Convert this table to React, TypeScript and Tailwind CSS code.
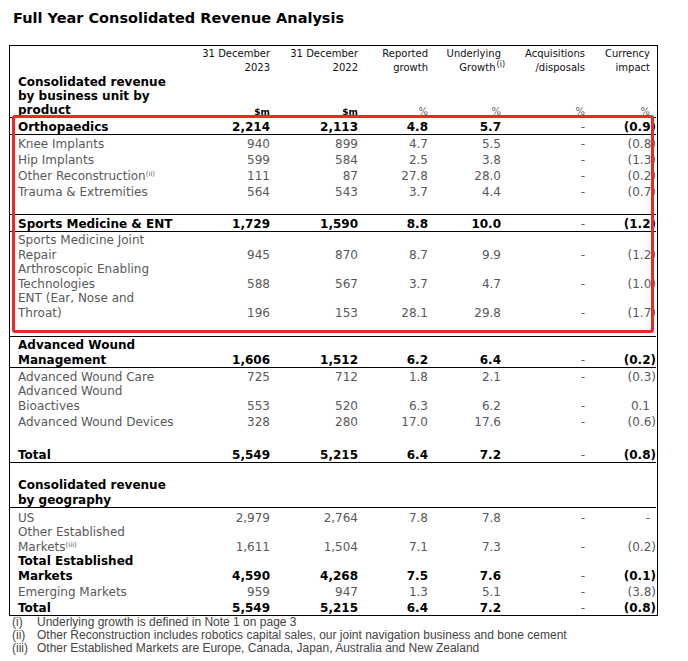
import type { ReactNode } from 'react';

const COLS = 'grid grid-cols-[186px_74px_88px_70px_73px_84px_71px]';

type Row = {
  label?: ReactNode;
  vals?: string[];
  bold?: boolean;
  h: string;
  line?: boolean;
};

const rows: Row[] = [
  { label: 'Orthopaedics', vals: ['2,214', '2,113', '4.8', '5.7', '-', '(0.9)'], bold: true, h: 'h-[17px]', line: true },
  { label: 'Knee Implants', vals: ['940', '899', '4.7', '5.5', '-', '(0.8)'], h: 'h-[16px]' },
  { label: 'Hip Implants', vals: ['599', '584', '2.5', '3.8', '-', '(1.3)'], h: 'h-[16px]' },
  {
    label: (
      <>
        Other Reconstruction<sup className="text-[7px]">(ii)</sup>
      </>
    ),
    vals: ['111', '87', '27.8', '28.0', '-', '(0.2)'],
    h: 'h-[16px]',
  },
  { label: 'Trauma & Extremities', vals: ['564', '543', '3.7', '4.4', '-', '(0.7)'], h: 'h-[16px]' },
  { h: 'h-[16px]', line: true },
  { label: 'Sports Medicine & ENT', vals: ['1,729', '1,590', '8.8', '10.0', '-', '(1.2)'], bold: true, h: 'h-[17px]', line: true },
  { label: <>Sports Medicine Joint<br />Repair</>, vals: ['945', '870', '8.7', '9.9', '-', '(1.2)'], h: 'h-[30px]' },
  { label: <>Arthroscopic Enabling<br />Technologies</>, vals: ['588', '567', '3.7', '4.7', '-', '(1.0)'], h: 'h-[29px]' },
  { label: <>ENT (Ear, Nose and<br />Throat)</>, vals: ['196', '153', '28.1', '29.8', '-', '(1.7)'], h: 'h-[29px]' },
  { h: 'h-[17px]', line: true },
  { label: <>Advanced Wound<br />Management</>, vals: ['1,606', '1,512', '6.2', '6.4', '-', '(0.2)'], bold: true, h: 'h-[31px]', line: true },
  { label: 'Advanced Wound Care', vals: ['725', '712', '1.8', '2.1', '-', '(0.3)'], h: 'h-[16px]' },
  { label: <>Advanced Wound<br />Bioactives</>, vals: ['553', '520', '6.3', '6.2', '-', '0.1'], h: 'h-[29px]' },
  { label: 'Advanced Wound Devices', vals: ['328', '280', '17.0', '17.6', '-', '(0.6)'], h: 'h-[16px]' },
  { h: 'h-[17px]' },
  { label: 'Total', vals: ['5,549', '5,215', '6.4', '7.2', '-', '(0.8)'], bold: true, h: 'h-[17px]', line: true },
  { h: 'h-[15px]' },
  { label: <>Consolidated revenue<br />by geography</>, bold: true, h: 'h-[30px]', line: true },
  { label: 'US', vals: ['2,979', '2,764', '7.8', '7.8', '-', '-'], h: 'h-[17px]' },
  {
    label: (
      <>
        Other Established
        <br />
        Markets<sup className="text-[7px]">(iii)</sup>
      </>
    ),
    vals: ['1,611', '1,504', '7.1', '7.3', '-', '(0.2)'],
    h: 'h-[29px]',
  },
  { label: <>Total Established<br />Markets</>, vals: ['4,590', '4,268', '7.5', '7.6', '-', '(0.1)'], bold: true, h: 'h-[29px]' },
  { label: 'Emerging Markets', vals: ['959', '947', '1.3', '5.1', '-', '(3.8)'], h: 'h-[16px]' },
  { label: 'Total', vals: ['5,549', '5,215', '6.4', '7.2', '-', '(0.8)'], bold: true, h: 'h-[16px]' },
];

const notes = [
  ['(i)', 'Underlying growth is defined in Note 1 on page 3'],
  ['(ii)', 'Other Reconstruction includes robotics capital sales, our joint navigation business and bone cement'],
  ['(iii)', 'Other Established Markets are Europe, Canada, Japan, Australia and New Zealand'],
];

function HeadCell({ top, unit, unitBold, pad }: { top: ReactNode; unit: string; unitBold?: boolean; pad?: boolean }) {
  return (
    <div className={`flex flex-col justify-between items-end text-right pt-px ${pad ? 'pr-[6px]' : ''}`}>
      <div className="text-[10px] leading-[14px] text-[#111]">{top}</div>
      <div className={unitBold ? 'text-[9px] leading-[10px] font-bold text-black' : 'text-[10px] leading-[10px] text-[#666]'}>
        {unit}
      </div>
    </div>
  );
}

function TableRow({ row }: { row: Row }) {
  const tone = row.bold ? 'font-bold text-black' : 'text-[#595959]';
  return (
    <div className={`${COLS} ${row.h} ${row.line ? 'border-b border-black' : ''} text-[12px] leading-[14.5px]`}>
      <div className={`pl-2 flex items-end ${tone}`}>
        <div>{row.label}</div>
      </div>
      {row.vals?.map((v, i) => {
        const isDash = i === 4 || v === '-';
        const pad = i === 5 && !v.startsWith('(');
        return (
          <div
            key={i}
            className={`flex items-end justify-end ${isDash ? 'text-[#595959] font-normal' : tone} ${pad ? 'pr-[6px]' : ''}`}
          >
            {v}
          </div>
        );
      })}
    </div>
  );
}

export default function App() {
  return (
    <div className="min-h-screen bg-white pl-[9px] pt-[8px] font-['DejaVu_Sans',Verdana,sans-serif]">
      <h1 className="ml-[4px] text-[14.5px] leading-[20px] font-bold text-black">
        Full Year Consolidated Revenue Analysis
      </h1>

      <div className="relative mt-[17px] w-[649px] border border-black pr-px">
        <div className={`${COLS} h-[72px] border-b border-black`}>
          <div className="pl-2 flex items-end text-[12px] leading-[14px] font-bold text-black">
            <div>
              Consolidated revenue
              <br />
              by business unit by
              <br />
              product
            </div>
          </div>
          <HeadCell top={<>31 December<br />2023</>} unit="$m" unitBold />
          <HeadCell top={<>31 December<br />2022</>} unit="$m" unitBold />
          <HeadCell top={<>Reported<br />growth</>} unit="%" />
          <HeadCell
            top={
              <>
                Underlying
                <br />
                Growth<sup className="text-[8px] ml-px -mr-[4px]">(i)</sup>
              </>
            }
            unit="%"
          />
          <HeadCell top={<>Acquisitions<br />/disposals</>} unit="%" />
          <HeadCell top={<>Currency<br />impact</>} unit="%" pad />
        </div>

        {rows.map((r, i) => (
          <TableRow key={i} row={r} />
        ))}

        {/* annotation box drawn over the first two business units */}
        <div className="absolute left-[2px] top-[69px] w-[642px] h-[218px] border-[3px] border-[#ec2a24] rounded-[3px] pointer-events-none" />
      </div>

      <div className="ml-[3px] font-['Liberation_Sans_Narrow','Liberation_Sans',sans-serif] text-[12px] leading-[13px] text-[#444]">
        {notes.map(([mark, text]) => (
          <div key={mark} className="grid grid-cols-[25px_1fr]">
            <span>{mark}</span>
            <span>{text}</span>
          </div>
        ))}
      </div>
    </div>
  );
}
